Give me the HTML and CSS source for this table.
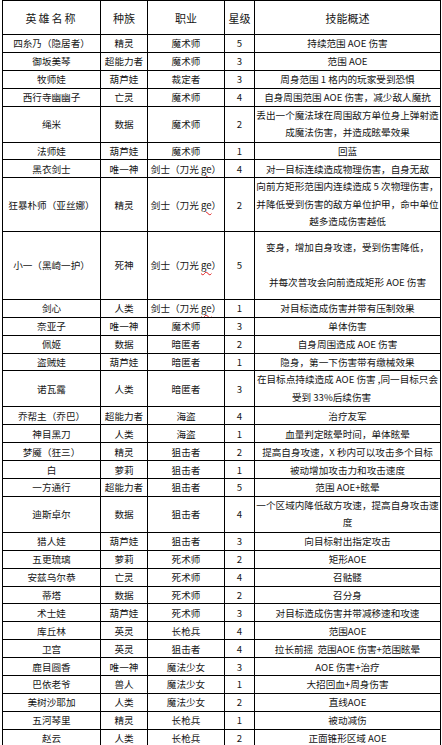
FILE: index.html
```html
<!DOCTYPE html>
<html lang="zh-CN">
<head>
<meta charset="utf-8">
<title>英雄列表</title>
<link rel="stylesheet" href="styles.css">
</head>
<body>
<table class="sheet">
  <colgroup>
    <col class="c-name"><col class="c-race"><col class="c-job"><col class="c-star"><col class="c-skill">
  </colgroup>
  <thead>
    <tr class="head">
      <th class="wide">英雄名称</th><th>种族</th><th>职业</th><th>星级</th><th>技能概述</th>
    </tr>
  </thead>
  <tbody>
    <tr><td>四糸乃（隐居者）</td><td>精灵</td><td>魔术师</td><td>5</td><td>持续范围 AOE 伤害</td></tr>
    <tr><td>御坂美琴</td><td>超能力者</td><td>魔术师</td><td>3</td><td>范围 AOE</td></tr>
    <tr><td>牧师娃</td><td>葫芦娃</td><td>裁定者</td><td>3</td><td>周身范围 1 格内的玩家受到恐惧</td></tr>
    <tr><td>西行寺幽幽子</td><td>亡灵</td><td>魔术师</td><td>4</td><td>自身周围范围 AOE 伤害，减少敌人魔抗</td></tr>
    <tr class="h2"><td>绳米</td><td>数据</td><td>魔术师</td><td>2</td><td class="lines">丢出一个魔法球在周围敌方单位身上弹射造<br>成魔法伤害，并造成眩晕效果</td></tr>
    <tr><td>法师娃</td><td>葫芦娃</td><td>魔术师</td><td>1</td><td>回蓝</td></tr>
    <tr><td>黑衣剑士</td><td>唯一神</td><td>剑士（刀光 <span class="typo">ge</span>）</td><td>4</td><td>对一目标连续造成物理伤害，自身无敌</td></tr>
    <tr class="h3"><td>狂暴朴师（亚丝娜）</td><td>精灵</td><td>剑士（刀光 <span class="typo">ge</span>）</td><td>2</td><td class="lines">向前方矩形范围内连续造成 5 次物理伤害，<br>并降低受到伤害的敌方单位护甲，命中单位<br>越多造成伤害越低</td></tr>
    <tr class="h4"><td>小一（黑崎一护）</td><td>死神</td><td>剑士（刀光 <span class="typo">ge</span>）</td><td>5</td><td class="lines">变身，增加自身攻速，受到伤害降低，<br><br>并每次普攻会向前造成矩形 AOE 伤害</td></tr>
    <tr><td>剑心</td><td>人类</td><td>剑士（刀光 <span class="typo">ge</span>）</td><td>1</td><td>对目标造成伤害并带有压制效果</td></tr>
    <tr><td>奈亚子</td><td>唯一神</td><td>魔术师</td><td>3</td><td>单体伤害</td></tr>
    <tr><td>佩姬</td><td>数据</td><td>暗匿者</td><td>2</td><td>自身周围造成 AOE 伤害</td></tr>
    <tr><td>盗贼娃</td><td>葫芦娃</td><td>暗匿者</td><td>1</td><td>隐身，第一下伤害带有缴械效果</td></tr>
    <tr class="h2b"><td>诺瓦露</td><td>人类</td><td>暗匿者</td><td>3</td><td class="lines">在目标点持续造成 AOE 伤害 ,同一目标只会<br><span class="lead">受到 33%后续伤害</span></td></tr>
    <tr><td>乔帮主（乔巴）</td><td>超能力者</td><td>海盗</td><td>4</td><td>治疗友军</td></tr>
    <tr><td>神目黑刀</td><td>人类</td><td>海盗</td><td>1</td><td>血量判定眩晕时间，单体眩晕</td></tr>
    <tr><td>梦魇（狂三）</td><td>精灵</td><td>狙击者</td><td>2</td><td>提高自身攻速，X 秒内可以攻击多个目标</td></tr>
    <tr><td>白</td><td>萝莉</td><td>狙击者</td><td>1</td><td>被动增加攻击力和攻击速度</td></tr>
    <tr><td>一方通行</td><td>超能力者</td><td>狙击者</td><td>5</td><td>范围 AOE+眩晕</td></tr>
    <tr class="h2"><td>迪斯卓尔</td><td>数据</td><td>狙击者</td><td>4</td><td class="lines">一个区域内降低敌方攻速，提高自身攻击速<br>度</td></tr>
    <tr><td>猎人娃</td><td>葫芦娃</td><td>狙击者</td><td>3</td><td>向目标射出指定攻击</td></tr>
    <tr><td>五更琉璃</td><td>萝莉</td><td>死术师</td><td>2</td><td>矩形AOE</td></tr>
    <tr><td>安兹乌尔恭</td><td>亡灵</td><td>死术师</td><td>4</td><td>召骷髅</td></tr>
    <tr><td>蒂塔</td><td>数据</td><td>死术师</td><td>2</td><td>召分身</td></tr>
    <tr><td>术士娃</td><td>葫芦娃</td><td>死术师</td><td>3</td><td>对目标造成伤害并带减移速和攻速</td></tr>
    <tr><td>库丘林</td><td>英灵</td><td>长枪兵</td><td>4</td><td>范围AOE</td></tr>
    <tr><td>卫宫</td><td>英灵</td><td>狙击者</td><td>4</td><td>拉长前摇&nbsp; 范围AOE 伤害+范围眩晕</td></tr>
    <tr><td>鹿目圆香</td><td>唯一神</td><td>魔法少女</td><td>3</td><td>AOE 伤害+治疗</td></tr>
    <tr><td>巴依老爷</td><td>兽人</td><td>魔法少女</td><td>1</td><td>大招回血+周身伤害</td></tr>
    <tr><td>美树沙耶加</td><td>人类</td><td>魔法少女</td><td>2</td><td>直线AOE</td></tr>
    <tr><td>五河琴里</td><td>精灵</td><td>长枪兵</td><td>1</td><td>被动减伤</td></tr>
    <tr><td>赵云</td><td>人类</td><td>长枪兵</td><td>2</td><td>正面锥形区域 AOE</td></tr>
  </tbody>
</table>
</body>
</html>
```

FILE: styles.css
```css
html, body {
  margin: 0;
  padding: 0;
  background: #ffffff;
}

body {
  font-family: "Noto Sans CJK SC", "Liberation Sans", sans-serif;
  color: #151515;
}

.sheet {
  border-collapse: collapse;
  table-layout: fixed;
  width: 438px;
  margin: 0 0 0 2px;
}

.c-name { width: 98px; }
.c-race { width: 47px; }
.c-job { width: 77px; }
.c-star { width: 30px; }
.c-skill { width: 186px; }

.sheet th,
.sheet td {
  border: 1px solid #000000;
  padding: 0;
  text-align: center;
  vertical-align: middle;
  white-space: nowrap;
  overflow: hidden;
  font-size: 9.6px;
  line-height: 12px;
  font-weight: normal;
}

.sheet tbody tr {
  height: 17.9px;
}

.sheet .head {
  height: 34px;
}

.sheet th {
  font-size: 11px;
}

.sheet th.wide {
  letter-spacing: 2px;
}

.sheet tr.h2 { height: 36px; }
.sheet tr.h2b { height: 35px; }
.sheet tr.h3 { height: 51px; }
.sheet tr.h4 { height: 68px; }

.sheet td.lines {
  line-height: 17.5px;
}

.lead {
  margin-right: 32px;
}

.typo {
  text-decoration: underline wavy #e02020;
  text-decoration-thickness: 1px;
  text-underline-offset: 2px;
}
```
